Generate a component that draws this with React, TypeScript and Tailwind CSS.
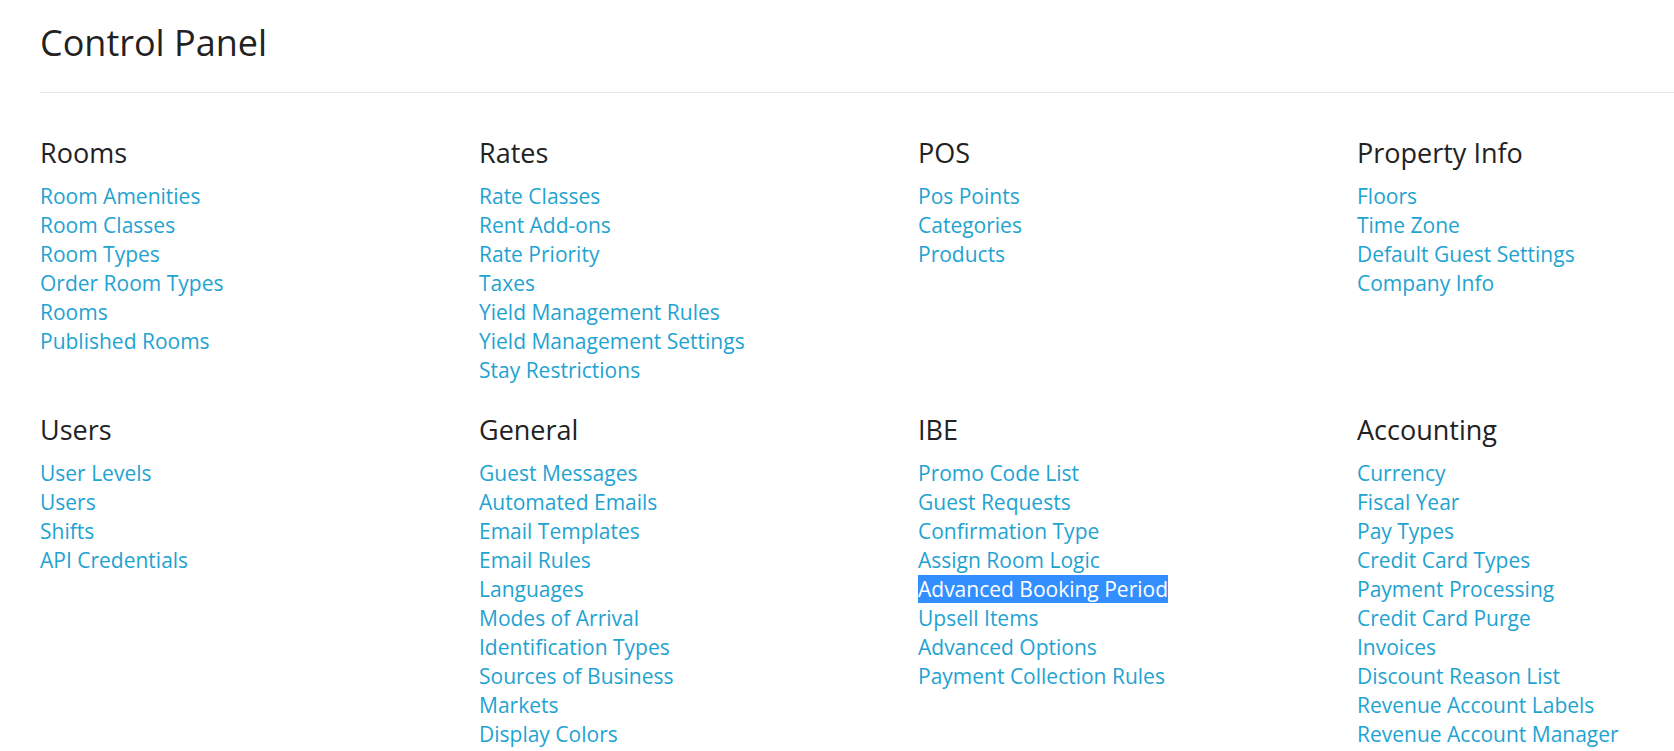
import React from "react";

type Section = { title: string; links: string[] };

const sections: Section[] = [
  {
    title: "Rooms",
    links: ["Room Amenities", "Room Classes", "Room Types", "Order Room Types", "Rooms", "Published Rooms"],
  },
  {
    title: "Rates",
    links: [
      "Rate Classes",
      "Rent Add-ons",
      "Rate Priority",
      "Taxes",
      "Yield Management Rules",
      "Yield Management Settings",
      "Stay Restrictions",
    ],
  },
  { title: "POS", links: ["Pos Points", "Categories", "Products"] },
  {
    title: "Property Info",
    links: ["Floors", "Time Zone", "Default Guest Settings", "Company Info"],
  },
  { title: "Users", links: ["User Levels", "Users", "Shifts", "API Credentials"] },
  {
    title: "General",
    links: [
      "Guest Messages",
      "Automated Emails",
      "Email Templates",
      "Email Rules",
      "Languages",
      "Modes of Arrival",
      "Identification Types",
      "Sources of Business",
      "Markets",
      "Display Colors",
    ],
  },
  {
    title: "IBE",
    links: [
      "Promo Code List",
      "Guest Requests",
      "Confirmation Type",
      "Assign Room Logic",
      "Advanced Booking Period",
      "Upsell Items",
      "Advanced Options",
      "Payment Collection Rules",
    ],
  },
  {
    title: "Accounting",
    links: [
      "Currency",
      "Fiscal Year",
      "Pay Types",
      "Credit Card Types",
      "Payment Processing",
      "Credit Card Purge",
      "Invoices",
      "Discount Reason List",
      "Revenue Account Labels",
      "Revenue Account Manager",
    ],
  },
];

// the one link that shows as selected text in the screenshot
const SELECTED = "Advanced Booking Period";

function SectionBlock({ section }: { section: Section }) {
  return (
    <div>
      <h3 className="text-[27px] leading-[28px] text-[#222222] mb-[15px]">{section.title}</h3>
      <ul>
        {section.links.map((link) => (
          <li key={link} className="text-[21px] leading-[29px]">
            <a href="#" className="text-[#1fa3d1]">
              {link === SELECTED ? <span className="bg-[#338fff] text-white">{link}</span> : link}
            </a>
          </li>
        ))}
      </ul>
    </div>
  );
}

export default function App() {
  return (
    <div
      className="min-h-screen w-full overflow-hidden bg-white pl-[40px] pt-[23px]"
      style={{ fontFamily: '"Open Sans", "Noto Sans", sans-serif' }}
    >
      <h1 className="text-[36px] leading-[40px] text-[#222222]">Control Panel</h1>
      <div className="mt-[29px] border-t border-[#e6e6e6]" />

      <div className="mt-[46px] grid grid-cols-[439px_439px_439px_439px] gap-y-[31px]">
        {sections.map((s) => (
          <SectionBlock key={s.title} section={s} />
        ))}
      </div>
    </div>
  );
}
